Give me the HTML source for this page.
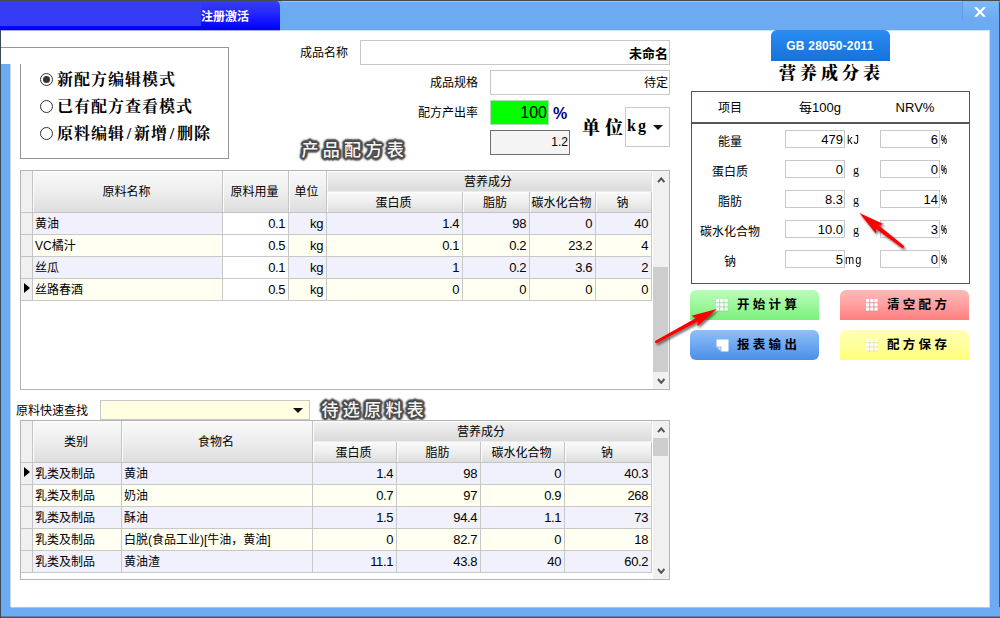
<!DOCTYPE html>
<html lang="zh-CN"><head><meta charset="utf-8"><title>营养成分表</title>
<style>
*{box-sizing:border-box;margin:0;padding:0}
html,body{width:1000px;height:618px;overflow:hidden;background:#fff}
body{position:relative;font:12px/1 "Liberation Sans","Noto Sans CJK SC",sans-serif;color:#000}
.a{position:absolute}
.lb{background:#6caaf2}
.t{position:absolute;white-space:nowrap;line-height:16px;height:16px}
.r{text-align:right}
.c{text-align:center}
.serif{font-family:"Liberation Serif","Noto Serif CJK SC",serif;font-weight:bold}
.inp{position:absolute;border:1px solid #c8c8c8;background:#fff;text-align:right;white-space:nowrap}
.glow{position:absolute;color:#f6f6f6;font-weight:500;font-size:17px;letter-spacing:4.3px;line-height:22px;white-space:nowrap;
 text-shadow:1.00px 0.00px 0.3px #484848,0.71px 0.71px 0.3px #484848,0.00px 1.00px 0.3px #484848,-0.71px 0.71px 0.3px #484848,-1.00px 0.00px 0.3px #484848,-0.71px -0.71px 0.3px #484848,-0.00px -1.00px 0.3px #484848,0.71px -0.71px 0.3px #484848,1.80px 0.00px 0.8px #515151,1.27px 1.27px 0.8px #515151,0.00px 1.80px 0.8px #515151,-1.27px 1.27px 0.8px #515151,-1.80px 0.00px 0.8px #515151,-1.27px -1.27px 0.8px #515151,-0.00px -1.80px 0.8px #515151,1.27px -1.27px 0.8px #515151,2.60px 0.00px 1.4px #606060,2.25px 1.30px 1.4px #606060,1.30px 2.25px 1.4px #606060,0.00px 2.60px 1.4px #606060,-1.30px 2.25px 1.4px #606060,-2.25px 1.30px 1.4px #606060,-2.60px 0.00px 1.4px #606060,-2.25px -1.30px 1.4px #606060,-1.30px -2.25px 1.4px #606060,-0.00px -2.60px 1.4px #606060,1.30px -2.25px 1.4px #606060,2.25px -1.30px 1.4px #606060,0 0 4px #707070}
.grid{position:absolute;border:1px solid #b4b4b4;background:#fff;overflow:hidden}
.hd{position:absolute;background:linear-gradient(#f9f9f9,#eeeeee 50%,#dddddd);border-right:1px solid #c4c4c4;border-bottom:1px solid #c4c4c4;text-align:center;font-size:12px;padding-right:2px;box-shadow:inset 1px 1px 0 #fcfcfc}
.cell{position:absolute;border-right:1px solid #c8c8c8;border-bottom:1px solid #c8c8c8;font-size:13px;line-height:22px;white-space:nowrap;overflow:hidden}
.sel{position:absolute;background:#f0f0f0;border-right:1px solid #c4c4c4;border-bottom:1px solid #c4c4c4}
.btn{position:absolute;width:129px;height:30px;font-weight:bold;font-size:12.5px;letter-spacing:3.3px;line-height:30px;white-space:nowrap}
</style></head>
<body>
<div class="a lb" style="left:0;top:0;width:1000px;height:30px"></div>
<div class="a" style="left:0;top:0;width:280px;height:30px;border-top-right-radius:6px;background:linear-gradient(#373ef7,#272bfa 40%,#1114ff 70%,#0000f6)"></div>
<div class="a" style="left:0;top:1px;width:201px;height:25px;background:#363cf6"></div>
<div class="a" style="left:0;top:0;width:1000px;height:1px;background:#454a55"></div>
<div class="a" style="left:282px;top:1px;width:680px;height:1px;background:#9ac6f7"></div>
<div class="a" style="left:1px;top:30px;width:279px;height:1px;background:#a6a6fb"></div>
<div class="a" style="left:280px;top:30px;width:710px;height:1px;background:#cfe3fb"></div>
<div class="t" style="left:201px;top:9px;color:#fff;font-weight:bold;font-size:12px">注册激活</div>
<div class="a" style="left:962px;top:1px;width:36px;height:19px;border-left:1px solid #5f9be2;background:linear-gradient(#7fb8f6,#6caaf2)"></div>
<svg class="a" style="left:974px;top:6.5px" width="12" height="10" viewBox="0 0 12 9.5"><polygon points="0,0 3,0 6,3.2 9,0 12,0 7.6,4.75 12,9.5 9,9.5 6,6.3 3,9.5 0,9.5 4.4,4.75" fill="#fff"/></svg>
<div class="a lb" style="left:990px;top:30px;width:9px;height:588px"></div>
<div class="a" style="left:999px;top:2px;width:1px;height:616px;background:#4d5358"></div>
<div class="a lb" style="left:0;top:607px;width:1000px;height:10px"></div>
<div class="a" style="left:0;top:616px;width:1000px;height:2px;background:linear-gradient(#5e7ea5 50%,#4d5358 50%)"></div>
<div class="a" style="left:11px;top:607px;width:979px;height:1px;background:#b4c6dc"></div>
<div class="a" style="left:989px;top:30px;width:1px;height:577px;background:#d9dde2"></div>
<div class="a lb" style="left:1px;top:64px;width:9px;height:545px"></div><div class="a" style="left:10px;top:64px;width:1px;height:543px;background:#c9d6e6"></div>
<div class="a" style="left:0;top:30px;width:1px;height:588px;background:#3a4a5a"></div>
<div class="a" style="left:1px;top:47px;width:228px;height:1px;background:#959595"></div>
<div class="a" style="left:228px;top:47px;width:1px;height:112px;background:#959595"></div>
<div class="a" style="left:20px;top:158px;width:209px;height:1px;background:#959595"></div>
<div class="a" style="left:20px;top:64px;width:1px;height:95px;background:#959595"></div>
<div class="a" style="left:40px;top:73px;width:13px;height:13px;border:1px solid #333;border-radius:50%;background:#fff"></div>
<div class="a" style="left:43px;top:76px;width:7px;height:7px;border-radius:50%;background:#333"></div>
<div class="t serif" style="left:57px;top:69px;font-size:16px;line-height:22px;height:22px;letter-spacing:1px">新配方编辑模式</div>
<div class="a" style="left:40px;top:100px;width:13px;height:13px;border:1px solid #333;border-radius:50%;background:#fff"></div>
<div class="t serif" style="left:57px;top:96px;font-size:16px;line-height:22px;height:22px;letter-spacing:1px">已有配方查看模式</div>
<div class="a" style="left:40px;top:127px;width:13px;height:13px;border:1px solid #333;border-radius:50%;background:#fff"></div>
<div class="t serif" style="left:57px;top:123px;font-size:16px;line-height:22px;height:22px;letter-spacing:1px">原料编辑<span style="padding:0 1.75px">/</span>新增<span style="padding:0 1.75px">/</span>删除</div>
<div class="t" style="left:300px;top:45px">成品名称</div>
<div class="inp" style="left:360px;top:40px;width:310px;height:25px;font-weight:bold;font-size:13px;line-height:25px;padding-right:1px">未命名</div>
<div class="t" style="left:430px;top:75px">成品规格</div>
<div class="inp" style="left:490px;top:70px;width:180px;height:25px;font-size:12px;line-height:25px;padding-right:1px">待定</div>
<div class="t" style="left:418px;top:105px">配方产出率</div>
<div class="inp" style="left:490px;top:100px;width:59px;height:25px;background:#00ff00;border-color:#b8d8b8;font-size:16px;line-height:23px;padding-right:1px">100</div>
<div class="t" style="left:553px;top:104px;font-weight:bold;font-size:16px;color:#000080;line-height:20px;height:20px">%</div>
<div class="inp" style="left:490px;top:130px;width:80px;height:25px;background:#f4f4f4;border-color:#6e6e6e;font-size:12px;line-height:23px;padding-right:1px">1.2</div>
<div class="t serif" style="font-weight:900;left:582px;top:114.5px;font-size:18px;line-height:26px;height:26px;letter-spacing:5px">单位</div>
<div class="a" style="left:625px;top:107px;width:45px;height:40px;border:1px solid #c8c8c8;background:#fff"></div>
<div class="t serif" style="left:627px;top:114px;font-size:16px;line-height:24px;height:24px;letter-spacing:2px">kg</div>
<div class="a" style="left:653px;top:125px;width:0;height:0;border-left:5px solid transparent;border-right:5px solid transparent;border-top:5px solid #111"></div>
<div class="glow" style="left:301.5px;top:140px">产品配方表</div>
<div class="glow" style="left:321.5px;top:400px">待选原料表</div>
<div class="grid" style="left:20px;top:170px;width:650px;height:220px"><div class="sel" style="left:0;top:0;width:12px;height:42px"></div><div class="hd" style="left:12px;top:0;width:190px;height:42px;line-height:42px">原料名称</div><div class="hd" style="left:202px;top:0;width:66px;height:42px;line-height:42px">原料用量</div><div class="hd" style="left:268px;top:0;width:38px;height:42px;line-height:42px">单位</div><div class="hd" style="left:306px;top:0;width:325px;height:21px;line-height:22px;background:linear-gradient(#f2f2f2,#dadada);border-bottom-color:#ececec;border-right-color:#e4e4e4">营养成分</div><div class="hd" style="left:306px;top:21px;width:136px;height:21px;line-height:23px">蛋白质</div><div class="hd" style="left:442px;top:21px;width:67px;height:21px;line-height:23px">脂肪</div><div class="hd" style="left:509px;top:21px;width:66px;height:21px;line-height:23px">碳水化合物</div><div class="hd" style="left:575px;top:21px;width:56px;height:21px;line-height:23px">钠</div><div class="sel" style="left:0;top:42px;width:12px;height:22px"></div><div class="cell" style="left:12px;top:42px;width:190px;height:22px;background:#f0f1fd;padding-left:2px;font-size:12px;line-height:23px">黄油</div><div class="cell" style="left:202px;top:42px;width:66px;height:22px;background:#fff;padding-right:3px;text-align:right;letter-spacing:-.4px">0.1</div><div class="cell" style="left:268px;top:42px;width:38px;height:22px;background:#f0f1fd;padding-right:3px;text-align:right;letter-spacing:-.4px">kg</div><div class="cell" style="left:306px;top:42px;width:136px;height:22px;background:#f0f1fd;padding-right:3px;text-align:right;letter-spacing:-.4px">1.4</div><div class="cell" style="left:442px;top:42px;width:67px;height:22px;background:#f0f1fd;padding-right:3px;text-align:right;letter-spacing:-.4px">98</div><div class="cell" style="left:509px;top:42px;width:66px;height:22px;background:#f0f1fd;padding-right:3px;text-align:right;letter-spacing:-.4px">0</div><div class="cell" style="left:575px;top:42px;width:56px;height:22px;background:#f0f1fd;padding-right:3px;text-align:right;letter-spacing:-.4px">40</div><div class="sel" style="left:0;top:64px;width:12px;height:22px"></div><div class="cell" style="left:12px;top:64px;width:190px;height:22px;background:#fffff2;padding-left:2px;font-size:12px;line-height:23px">VC橘汁</div><div class="cell" style="left:202px;top:64px;width:66px;height:22px;background:#fff;padding-right:3px;text-align:right;letter-spacing:-.4px">0.5</div><div class="cell" style="left:268px;top:64px;width:38px;height:22px;background:#fffff2;padding-right:3px;text-align:right;letter-spacing:-.4px">kg</div><div class="cell" style="left:306px;top:64px;width:136px;height:22px;background:#fffff2;padding-right:3px;text-align:right;letter-spacing:-.4px">0.1</div><div class="cell" style="left:442px;top:64px;width:67px;height:22px;background:#fffff2;padding-right:3px;text-align:right;letter-spacing:-.4px">0.2</div><div class="cell" style="left:509px;top:64px;width:66px;height:22px;background:#fffff2;padding-right:3px;text-align:right;letter-spacing:-.4px">23.2</div><div class="cell" style="left:575px;top:64px;width:56px;height:22px;background:#fffff2;padding-right:3px;text-align:right;letter-spacing:-.4px">4</div><div class="sel" style="left:0;top:86px;width:12px;height:22px"></div><div class="cell" style="left:12px;top:86px;width:190px;height:22px;background:#f0f1fd;padding-left:2px;font-size:12px;line-height:23px">丝瓜</div><div class="cell" style="left:202px;top:86px;width:66px;height:22px;background:#fff;padding-right:3px;text-align:right;letter-spacing:-.4px">0.1</div><div class="cell" style="left:268px;top:86px;width:38px;height:22px;background:#f0f1fd;padding-right:3px;text-align:right;letter-spacing:-.4px">kg</div><div class="cell" style="left:306px;top:86px;width:136px;height:22px;background:#f0f1fd;padding-right:3px;text-align:right;letter-spacing:-.4px">1</div><div class="cell" style="left:442px;top:86px;width:67px;height:22px;background:#f0f1fd;padding-right:3px;text-align:right;letter-spacing:-.4px">0.2</div><div class="cell" style="left:509px;top:86px;width:66px;height:22px;background:#f0f1fd;padding-right:3px;text-align:right;letter-spacing:-.4px">3.6</div><div class="cell" style="left:575px;top:86px;width:56px;height:22px;background:#f0f1fd;padding-right:3px;text-align:right;letter-spacing:-.4px">2</div><div class="sel" style="left:0;top:108px;width:12px;height:22px"></div><div class="a" style="left:2.8px;top:112.4px;width:0;height:0;border-top:5.8px solid transparent;border-bottom:5.8px solid transparent;border-left:6.6px solid #000"></div><div class="cell" style="left:12px;top:108px;width:190px;height:22px;background:#fffff2;padding-left:2px;font-size:12px;line-height:23px">丝路春酒</div><div class="cell" style="left:202px;top:108px;width:66px;height:22px;background:#fff;padding-right:3px;text-align:right;letter-spacing:-.4px">0.5</div><div class="cell" style="left:268px;top:108px;width:38px;height:22px;background:#fffff2;padding-right:3px;text-align:right;letter-spacing:-.4px">kg</div><div class="cell" style="left:306px;top:108px;width:136px;height:22px;background:#fffff2;padding-right:3px;text-align:right;letter-spacing:-.4px">0</div><div class="cell" style="left:442px;top:108px;width:67px;height:22px;background:#fffff2;padding-right:3px;text-align:right;letter-spacing:-.4px">0</div><div class="cell" style="left:509px;top:108px;width:66px;height:22px;background:#fffff2;padding-right:3px;text-align:right;letter-spacing:-.4px">0</div><div class="cell" style="left:575px;top:108px;width:56px;height:22px;background:#fffff2;padding-right:3px;text-align:right;letter-spacing:-.4px">0</div><div class="a" style="left:632px;top:0;width:16px;height:218px;background:#f0f0f0"></div><div class="a" style="left:632px;top:96px;width:15px;height:105px;background:#cdcdcd"></div><svg class="a" style="left:635.5px;top:6px" width="9" height="6" viewBox="0 0 9 6"><path d="M1 5.2 L4.2 1.4 L7.4 5.2" stroke="#555" stroke-width="2" fill="none"/></svg><svg class="a" style="left:635.5px;top:207px" width="9" height="6" viewBox="0 0 9 6"><path d="M1 1 L4.2 4.8 L7.4 1" stroke="#555" stroke-width="2" fill="none"/></svg></div>
<div class="grid" style="left:20px;top:420px;width:650px;height:160px"><div class="sel" style="left:0;top:0;width:12px;height:42px"></div><div class="hd" style="left:12px;top:0;width:89px;height:42px;line-height:42px">类别</div><div class="hd" style="left:101px;top:0;width:191px;height:42px;line-height:42px">食物名</div><div class="hd" style="left:292px;top:0;width:339px;height:21px;line-height:22px;background:linear-gradient(#f2f2f2,#dadada);border-bottom-color:#ececec;border-right-color:#e4e4e4">营养成分</div><div class="hd" style="left:292px;top:21px;width:84px;height:21px;line-height:23px">蛋白质</div><div class="hd" style="left:376px;top:21px;width:84px;height:21px;line-height:23px">脂肪</div><div class="hd" style="left:460px;top:21px;width:84px;height:21px;line-height:23px">碳水化合物</div><div class="hd" style="left:544px;top:21px;width:87px;height:21px;line-height:23px">钠</div><div class="sel" style="left:0;top:42px;width:12px;height:22px"></div><div class="a" style="left:2.8px;top:46.4px;width:0;height:0;border-top:5.8px solid transparent;border-bottom:5.8px solid transparent;border-left:6.6px solid #000"></div><div class="cell" style="left:12px;top:42px;width:89px;height:22px;background:#f0f1fd;padding-left:2px;font-size:12px;line-height:23px">乳类及制品</div><div class="cell" style="left:101px;top:42px;width:191px;height:22px;background:#f0f1fd;padding-left:2px;font-size:12px;line-height:23px">黄油</div><div class="cell" style="left:292px;top:42px;width:84px;height:22px;background:#f0f1fd;padding-right:3px;text-align:right;letter-spacing:-.4px">1.4</div><div class="cell" style="left:376px;top:42px;width:84px;height:22px;background:#f0f1fd;padding-right:3px;text-align:right;letter-spacing:-.4px">98</div><div class="cell" style="left:460px;top:42px;width:84px;height:22px;background:#f0f1fd;padding-right:3px;text-align:right;letter-spacing:-.4px">0</div><div class="cell" style="left:544px;top:42px;width:87px;height:22px;background:#f0f1fd;padding-right:3px;text-align:right;letter-spacing:-.4px">40.3</div><div class="sel" style="left:0;top:64px;width:12px;height:22px"></div><div class="cell" style="left:12px;top:64px;width:89px;height:22px;background:#fffff2;padding-left:2px;font-size:12px;line-height:23px">乳类及制品</div><div class="cell" style="left:101px;top:64px;width:191px;height:22px;background:#fffff2;padding-left:2px;font-size:12px;line-height:23px">奶油</div><div class="cell" style="left:292px;top:64px;width:84px;height:22px;background:#fffff2;padding-right:3px;text-align:right;letter-spacing:-.4px">0.7</div><div class="cell" style="left:376px;top:64px;width:84px;height:22px;background:#fffff2;padding-right:3px;text-align:right;letter-spacing:-.4px">97</div><div class="cell" style="left:460px;top:64px;width:84px;height:22px;background:#fffff2;padding-right:3px;text-align:right;letter-spacing:-.4px">0.9</div><div class="cell" style="left:544px;top:64px;width:87px;height:22px;background:#fffff2;padding-right:3px;text-align:right;letter-spacing:-.4px">268</div><div class="sel" style="left:0;top:86px;width:12px;height:22px"></div><div class="cell" style="left:12px;top:86px;width:89px;height:22px;background:#f0f1fd;padding-left:2px;font-size:12px;line-height:23px">乳类及制品</div><div class="cell" style="left:101px;top:86px;width:191px;height:22px;background:#f0f1fd;padding-left:2px;font-size:12px;line-height:23px">酥油</div><div class="cell" style="left:292px;top:86px;width:84px;height:22px;background:#f0f1fd;padding-right:3px;text-align:right;letter-spacing:-.4px">1.5</div><div class="cell" style="left:376px;top:86px;width:84px;height:22px;background:#f0f1fd;padding-right:3px;text-align:right;letter-spacing:-.4px">94.4</div><div class="cell" style="left:460px;top:86px;width:84px;height:22px;background:#f0f1fd;padding-right:3px;text-align:right;letter-spacing:-.4px">1.1</div><div class="cell" style="left:544px;top:86px;width:87px;height:22px;background:#f0f1fd;padding-right:3px;text-align:right;letter-spacing:-.4px">73</div><div class="sel" style="left:0;top:108px;width:12px;height:22px"></div><div class="cell" style="left:12px;top:108px;width:89px;height:22px;background:#fffff2;padding-left:2px;font-size:12px;line-height:23px">乳类及制品</div><div class="cell" style="left:101px;top:108px;width:191px;height:22px;background:#fffff2;padding-left:2px;font-size:12px;line-height:23px">白脱(食品工业)[牛油，黄油]</div><div class="cell" style="left:292px;top:108px;width:84px;height:22px;background:#fffff2;padding-right:3px;text-align:right;letter-spacing:-.4px">0</div><div class="cell" style="left:376px;top:108px;width:84px;height:22px;background:#fffff2;padding-right:3px;text-align:right;letter-spacing:-.4px">82.7</div><div class="cell" style="left:460px;top:108px;width:84px;height:22px;background:#fffff2;padding-right:3px;text-align:right;letter-spacing:-.4px">0</div><div class="cell" style="left:544px;top:108px;width:87px;height:22px;background:#fffff2;padding-right:3px;text-align:right;letter-spacing:-.4px">18</div><div class="sel" style="left:0;top:130px;width:12px;height:22px"></div><div class="cell" style="left:12px;top:130px;width:89px;height:22px;background:#f0f1fd;padding-left:2px;font-size:12px;line-height:23px">乳类及制品</div><div class="cell" style="left:101px;top:130px;width:191px;height:22px;background:#f0f1fd;padding-left:2px;font-size:12px;line-height:23px">黄油渣</div><div class="cell" style="left:292px;top:130px;width:84px;height:22px;background:#f0f1fd;padding-right:3px;text-align:right;letter-spacing:-.4px">11.1</div><div class="cell" style="left:376px;top:130px;width:84px;height:22px;background:#f0f1fd;padding-right:3px;text-align:right;letter-spacing:-.4px">43.8</div><div class="cell" style="left:460px;top:130px;width:84px;height:22px;background:#f0f1fd;padding-right:3px;text-align:right;letter-spacing:-.4px">40</div><div class="cell" style="left:544px;top:130px;width:87px;height:22px;background:#f0f1fd;padding-right:3px;text-align:right;letter-spacing:-.4px">60.2</div><div class="a" style="left:632px;top:0;width:16px;height:158px;background:#f0f0f0"></div><div class="a" style="left:632px;top:17px;width:15px;height:18px;background:#cdcdcd"></div><svg class="a" style="left:635.5px;top:6px" width="9" height="6" viewBox="0 0 9 6"><path d="M1 5.2 L4.2 1.4 L7.4 5.2" stroke="#555" stroke-width="2" fill="none"/></svg><svg class="a" style="left:635.5px;top:147px" width="9" height="6" viewBox="0 0 9 6"><path d="M1 1 L4.2 4.8 L7.4 1" stroke="#555" stroke-width="2" fill="none"/></svg></div>
<div class="t" style="left:16px;top:403px">原料快速查找</div>
<div class="a" style="left:100px;top:400px;width:210px;height:20px;border:1px solid #c8c8c8;background:#ffffe1"></div>
<div class="a" style="left:293px;top:408px;width:0;height:0;border-left:5px solid transparent;border-right:5px solid transparent;border-top:5px solid #111"></div>
<div class="a" style="left:770.5px;top:30px;width:119px;height:30.5px;border-radius:6px 6px 0 0;background:linear-gradient(#2b8cf2,#1f7fe6 50%,#1a70da);color:#fff;font-weight:bold;font-size:12px;text-align:center;line-height:33px;letter-spacing:.2px">GB 28050-2011</div>
<div class="t serif" style="font-weight:900;left:779px;top:61px;font-size:17px;line-height:26px;height:26px;letter-spacing:4px">营养成分表</div>
<div class="a" style="left:691px;top:91px;width:279px;height:193px;border:1px solid #555"></div>
<div class="a" style="left:691px;top:122px;width:279px;height:2px;background:#555"></div>
<div class="t c" style="left:700px;top:100px;width:60px">项目</div>
<div class="t c" style="left:790px;top:100px;width:60px;font-size:13px">每100g</div>
<div class="t c" style="left:885px;top:100px;width:60px;font-size:13px">NRV%</div>
<div class="t c" style="left:690px;top:133.5px;width:80px">能量</div>
<div class="inp" style="left:785px;top:130px;width:60px;height:18px;font-size:13px;line-height:18px;padding-right:1px">479</div>
<div class="t" style="left:846.5px;top:132px;font-size:12px;letter-spacing:1.2px;transform:scaleX(.92);transform-origin:0 0">kJ</div>
<div class="inp" style="left:880px;top:130px;width:60px;height:18px;font-size:13px;line-height:18px;padding-right:1px">6</div>
<div class="t" style="left:941px;top:132px;font-size:12px;font-weight:bold;transform:scaleX(.55);transform-origin:0 0">%</div>
<div class="t c" style="left:690px;top:163.5px;width:80px">蛋白质</div>
<div class="inp" style="left:785px;top:160px;width:60px;height:18px;font-size:13px;line-height:18px;padding-right:1px">0</div>
<div class="t" style="left:853px;top:161.5px;font-size:12px;font-family:'Liberation Serif',serif">g</div>
<div class="inp" style="left:880px;top:160px;width:60px;height:18px;font-size:13px;line-height:18px;padding-right:1px">0</div>
<div class="t" style="left:941px;top:162px;font-size:12px;font-weight:bold;transform:scaleX(.55);transform-origin:0 0">%</div>
<div class="t c" style="left:690px;top:193.5px;width:80px">脂肪</div>
<div class="inp" style="left:785px;top:190px;width:60px;height:18px;font-size:13px;line-height:18px;padding-right:1px">8.3</div>
<div class="t" style="left:853px;top:191.5px;font-size:12px;font-family:'Liberation Serif',serif">g</div>
<div class="inp" style="left:880px;top:190px;width:60px;height:18px;font-size:13px;line-height:18px;padding-right:1px">14</div>
<div class="t" style="left:941px;top:192px;font-size:12px;font-weight:bold;transform:scaleX(.55);transform-origin:0 0">%</div>
<div class="t c" style="left:690px;top:223.5px;width:80px">碳水化合物</div>
<div class="inp" style="left:785px;top:220px;width:60px;height:18px;font-size:13px;line-height:18px;padding-right:1px">10.0</div>
<div class="t" style="left:853px;top:221.5px;font-size:12px;font-family:'Liberation Serif',serif">g</div>
<div class="inp" style="left:880px;top:220px;width:60px;height:18px;font-size:13px;line-height:18px;padding-right:1px">3</div>
<div class="t" style="left:941px;top:222px;font-size:12px;font-weight:bold;transform:scaleX(.55);transform-origin:0 0">%</div>
<div class="t c" style="left:690px;top:253.5px;width:80px">钠</div>
<div class="inp" style="left:785px;top:250px;width:60px;height:18px;font-size:13px;line-height:18px;padding-right:1px">5</div>
<div class="t" style="left:845px;top:252px;font-size:12px;letter-spacing:1.2px;transform:scaleX(.92);transform-origin:0 0">mg</div>
<div class="inp" style="left:880px;top:250px;width:60px;height:18px;font-size:13px;line-height:18px;padding-right:1px">0</div>
<div class="t" style="left:941px;top:252px;font-size:12px;font-weight:bold;transform:scaleX(.55);transform-origin:0 0">%</div>
<div class="btn" style="left:690px;top:290px;border-radius:6px 6px 0 0;background:linear-gradient(#b9fdb9,#a0f8a0 45%,#7bf07b)"><svg class="a" style="left:25.7px;top:8.5px" width="13" height="13" viewBox="0 0 13 13"><rect x="0.4" y="0.6" width="11.8" height="11.8" fill="#000" opacity=".1"/><rect x="0.0" y="0.0" width="3.3" height="3.3" fill="#fff"/><rect x="4.2" y="0.0" width="3.3" height="3.3" fill="#fff"/><rect x="8.4" y="0.0" width="3.3" height="3.3" fill="#fff"/><rect x="0.0" y="4.2" width="3.3" height="3.3" fill="#fff"/><rect x="4.2" y="4.2" width="3.3" height="3.3" fill="#fff"/><rect x="8.4" y="4.2" width="3.3" height="3.3" fill="#fff"/><rect x="0.0" y="8.4" width="3.3" height="3.3" fill="#fff"/><rect x="4.2" y="8.4" width="3.3" height="3.3" fill="#fff"/><rect x="8.4" y="8.4" width="3.3" height="3.3" fill="#fff"/></svg><span class="a" style="left:47px;top:0">开始计算</span></div>
<div class="btn" style="left:840px;top:290px;border-radius:6px 6px 0 0;background:linear-gradient(#ffb9b9,#ffa2a2 45%,#ff7e7e)"><svg class="a" style="left:25.7px;top:8.5px" width="13" height="13" viewBox="0 0 13 13"><rect x="0.4" y="0.6" width="11.8" height="11.8" fill="#000" opacity=".1"/><rect x="0.0" y="0.0" width="3.3" height="3.3" fill="#fff"/><rect x="4.2" y="0.0" width="3.3" height="3.3" fill="#fff"/><rect x="8.4" y="0.0" width="3.3" height="3.3" fill="#fff"/><rect x="0.0" y="4.2" width="3.3" height="3.3" fill="#fff"/><rect x="4.2" y="4.2" width="3.3" height="3.3" fill="#fff"/><rect x="8.4" y="4.2" width="3.3" height="3.3" fill="#fff"/><rect x="0.0" y="8.4" width="3.3" height="3.3" fill="#fff"/><rect x="4.2" y="8.4" width="3.3" height="3.3" fill="#fff"/><rect x="8.4" y="8.4" width="3.3" height="3.3" fill="#fff"/></svg><span class="a" style="left:47px;top:0">清空配方</span></div>
<div class="btn" style="left:690px;top:330px;border-radius:6px;background:linear-gradient(#8fc0f8,#6ea8f2 50%,#4a8fe8)"><svg class="a" style="left:26px;top:9px" width="13" height="13" viewBox="0 0 13 13"><path d="M0.5 0.5 H12.5 V12.5 H5 L0.5 8 Z" fill="#fff"/><path d="M0.5 8 H5 V12.5 Z" fill="#dfe9f7" stroke="#6f9fe0" stroke-width="0.7"/></svg><span class="a" style="left:47px;top:0">报表输出</span></div>
<div class="btn" style="left:840px;top:330px;border-radius:6px 6px 0 0;background:linear-gradient(#ffffb4,#ffffa0 45%,#ffff78)"><svg class="a" style="left:25.7px;top:8.5px" width="13" height="13" viewBox="0 0 13 13"><rect x="0.4" y="0.6" width="11.8" height="11.8" fill="#000" opacity=".1"/><rect x="0.0" y="0.0" width="3.3" height="3.3" fill="#fff"/><rect x="4.2" y="0.0" width="3.3" height="3.3" fill="#fff"/><rect x="8.4" y="0.0" width="3.3" height="3.3" fill="#fff"/><rect x="0.0" y="4.2" width="3.3" height="3.3" fill="#fff"/><rect x="4.2" y="4.2" width="3.3" height="3.3" fill="#fff"/><rect x="8.4" y="4.2" width="3.3" height="3.3" fill="#fff"/><rect x="0.0" y="8.4" width="3.3" height="3.3" fill="#fff"/><rect x="4.2" y="8.4" width="3.3" height="3.3" fill="#fff"/><rect x="8.4" y="8.4" width="3.3" height="3.3" fill="#fff"/></svg><span class="a" style="left:47px;top:0">配方保存</span></div>
<svg class="a" style="left:0;top:0;pointer-events:none" width="1000" height="618" viewBox="0 0 1000 618"><defs><filter id="sh" x="-20%" y="-20%" width="140%" height="140%"><feDropShadow dx="1.5" dy="2" stdDeviation="1.3" flood-color="#000" flood-opacity="0.55"/></filter></defs><path d="M656.9,343.2 L697.6,321.8 L697.4,326.6 L716.8,309.0 L691.4,315.8 L695.6,318.2 L655.5,340.8 A1.4,1.4 0 0 0 656.9,343.2 Z" fill="#ff0000" filter="url(#sh)"/><path d="M903.5,245.6 L878.8,225.6 L883.3,223.9 L859.4,213.1 L875.7,233.6 L876.3,228.9 L901.7,247.8 A1.4,1.4 0 0 0 903.5,245.6 Z" fill="#ff0000" filter="url(#sh)"/></svg>
</body></html>
